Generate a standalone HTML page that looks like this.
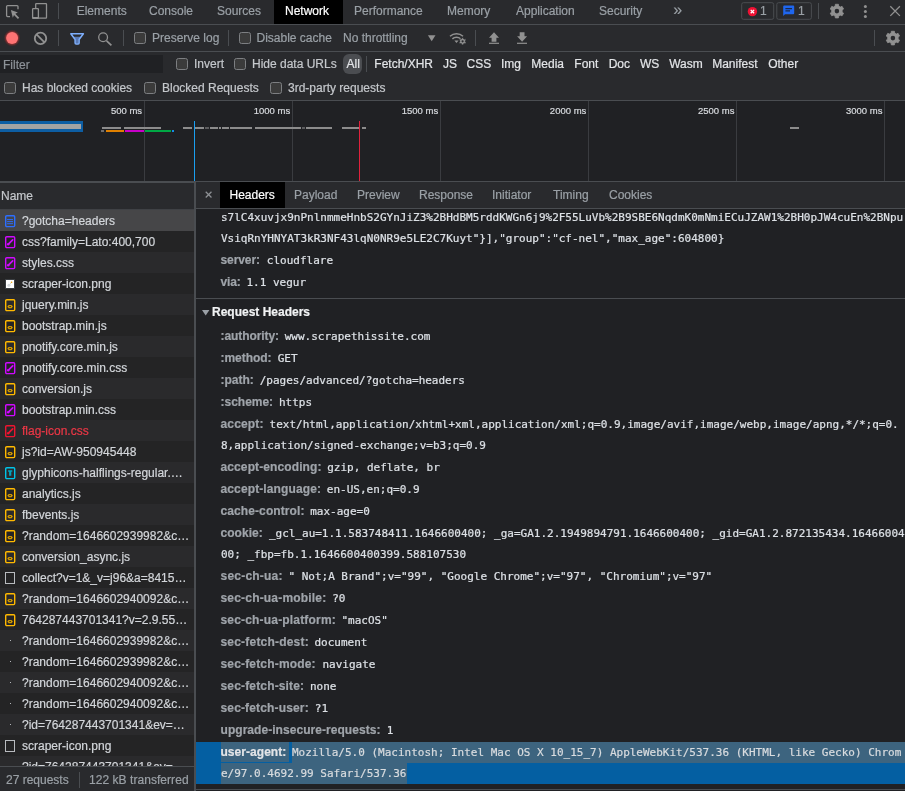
<!DOCTYPE html>
<html><head><meta charset="utf-8"><title>DevTools - Network</title>
<style>
*{box-sizing:border-box;margin:0;padding:0}
html,body{width:905px;height:791px;overflow:hidden;background:#202124}
body{will-change:transform;-webkit-text-stroke:.2px}
body{position:relative;font-family:"Liberation Sans",sans-serif;font-size:12px;color:#e8eaed}
.a,.t,.cb,.sep,.ic{position:absolute}
.t{white-space:pre;line-height:14px;height:14px}
.g{color:#9aa0a6}
.w{color:#e3e5e8}
.bar{position:absolute;left:0;width:905px;background:#292a2d}
.sep{width:1px;background:#4a4d51}
.cb{width:12px;height:12px;border:1px solid #7d7f82;border-radius:2.5px;background:#3b3b3b}
.mono{font-family:"DejaVu Sans Mono","Liberation Mono",monospace;font-size:11px}
.ic{overflow:visible}
.row{position:absolute;left:0;width:194px;height:21px}
.row .n{position:absolute;left:22px;top:4px;line-height:14px;white-space:pre;color:#d3d6da}
.hr{position:absolute;left:196px;width:709px;white-space:pre;line-height:21px}
.hn{position:absolute;left:24.5px;top:0;font-weight:bold;color:#9fa4aa;line-height:21px}
.hv{position:absolute;top:0;color:#dde1e6;line-height:21px}
.sel .hv{color:#d9dcdf}
</style></head><body>

<div class="bar" style="top:0;height:24px"></div>
<div class="a" style="left:0;top:24px;width:905px;height:1px;background:#4a4d51"></div>
<div class="a" style="left:274px;top:0;width:69px;height:24px;background:#000"></div>
<div class="t" style="left:76.7px;top:4px;color:#9aa0a6">Elements</div>
<div class="t" style="left:149px;top:4px;color:#9aa0a6">Console</div>
<div class="t" style="left:217px;top:4px;color:#9aa0a6">Sources</div>
<div class="t" style="left:285px;top:4px;color:#fff">Network</div>
<div class="t" style="left:354px;top:4px;color:#9aa0a6">Performance</div>
<div class="t" style="left:447px;top:4px;color:#9aa0a6">Memory</div>
<div class="t" style="left:516px;top:4px;color:#9aa0a6">Application</div>
<div class="t" style="left:599px;top:4px;color:#9aa0a6">Security</div>
<div class="t g" style="left:673.3px;top:3.4px;font-size:16px">»</div>
<div class="sep" style="left:58px;top:3px;height:16px"></div>
<div class="sep" style="left:818px;top:3px;height:16px"></div>
<div class="bar" style="top:25px;height:26px"></div>
<div class="a" style="left:0;top:51px;width:905px;height:1px;background:#4a4d51"></div>
<div class="sep" style="left:58px;top:30px;height:16px"></div>
<div class="sep" style="left:123px;top:30px;height:16px"></div>
<div class="sep" style="left:228px;top:30px;height:16px"></div>
<div class="sep" style="left:475px;top:30px;height:16px"></div>
<div class="sep" style="left:874px;top:30px;height:16px"></div>
<div class="cb" style="left:134px;top:32px"></div>
<div class="t g" style="left:152px;top:31px">Preserve log</div>
<div class="cb" style="left:239px;top:32px"></div>
<div class="t g" style="left:256.5px;top:31px">Disable cache</div>
<div class="t g" style="left:343px;top:31px">No throttling</div>
<svg class="ic" style="left:0;top:0" width="905" height="52" viewBox="0 0 905 52"><path d="M18 9.3V6.6a1 1 0 0 0-1-1H7.6a1 1 0 0 0-1 1v9a1 1 0 0 0 1 1H10" fill="none" stroke="#919191" stroke-width="1.3"/><path d="M10.9 9.9l7 2.6-2.6 1.3 3.9 3.9-1.3 1.3-3.9-3.9-1.2 2.6z" fill="#919191"/><rect x="35.7" y="3.6" width="10.8" height="14.6" rx=".6" fill="none" stroke="#919191" stroke-width="1.3"/><rect x="32.6" y="8.6" width="5.8" height="9.8" rx=".6" fill="#292a2d" stroke="#919191" stroke-width="1.3"/><rect x="32.6" y="17" width="5.8" height="1.6" fill="#919191"/><circle cx="12.1" cy="38.1" r="8" fill="#8a2a2a" opacity=".35"/><circle cx="12.1" cy="38.1" r="7" fill="#a83838" opacity=".45"/><circle cx="12.1" cy="38.1" r="6" fill="#ff7373"/><circle cx="40.5" cy="38.4" r="5.7" fill="none" stroke="#919191" stroke-width="1.8"/><path d="M36.5 34.4l8 8" stroke="#919191" stroke-width="1.8"/><path d="M73.3 36.8h7.6l-2.2 3v3.6h-3.2v-3.6z" fill="#5878b3"/><path d="M70.8 33.8h12.6l-4.3 5.7v3.5a1 1 0 0 1-1 1h-2a1 1 0 0 1-1-1v-3.5z" fill="none" stroke="#7eaefc" stroke-width="1.5" stroke-linejoin="round"/><circle cx="103.1" cy="37.3" r="4.4" fill="none" stroke="#919191" stroke-width="1.3"/><path d="M106.6 40.8l4.8 4.6" stroke="#919191" stroke-width="1.7"/><path d="M427.9 35.2h7.6l-3.8 6z" fill="#919191"/><path d="M450 36.2a9.6 9.6 0 0 1 13 0" fill="none" stroke="#919191" stroke-width="1.5"/><path d="M452.4 38.9a6 6 0 0 1 8.2 0" fill="none" stroke="#919191" stroke-width="1.5"/><path d="M454.4 40.6h4.2l-2.1 2.4z" fill="#919191"/><path d="M461.65 38.77 L461.86 37.67 L463.34 37.67 L463.55 38.77 L464.31 39.21 L465.37 38.85 L466.11 40.12 L465.26 40.86 L465.26 41.74 L466.11 42.48 L465.37 43.75 L464.31 43.39 L463.55 43.83 L463.34 44.93 L461.86 44.93 L461.65 43.83 L460.89 43.39 L459.83 43.75 L459.09 42.48 L459.94 41.74 L459.94 40.86 L459.09 40.12 L459.83 38.85 L460.89 39.21Z" fill="#919191" stroke="#292a2d" stroke-width=".6"/><circle cx="462.6" cy="41.3" r="1.1" fill="#292a2d"/><path d="M494 32.2l5 5.5h-2.6v4h-4.8v-4H489z" fill="#919191"/><rect x="489" y="42.7" width="10" height="1.2" fill="#919191"/><path d="M519.7 32.2h4.8v4h2.6l-5 5.5-5-5.5h2.6z" fill="#919191"/><rect x="517" y="42.7" width="10" height="1.2" fill="#919191"/><rect x="741.7" y="2.7" width="32" height="16.6" rx="1.8" fill="none" stroke="#4a4d51"/><rect x="776.8" y="2.7" width="34.6" height="16.6" rx="1.8" fill="none" stroke="#4a4d51"/><circle cx="752.4" cy="11.6" r="4.7" fill="#ee1133"/><path d="M750.7 9.9l3.4 3.4M754.1 9.9l-3.4 3.4" stroke="#fff" stroke-width="1.3"/><path d="M784.2 5.6h9a1 1 0 0 1 1 1v6.6a1 1 0 0 1-1 1h-8.2l-1.8 1.8V6.6a1 1 0 0 1 1-1z" fill="#1f66ee"/><path d="M785.4 8.6h6.6M785.4 10.9h4.6" stroke="#1a2a4a" stroke-width="1.1"/><path d="M835.13 6.10 L835.37 4.27 L838.43 4.27 L838.67 6.10 L840.34 7.07 L842.05 6.36 L843.58 9.01 L842.11 10.13 L842.11 12.07 L843.58 13.19 L842.05 15.84 L840.34 15.13 L838.67 16.10 L838.43 17.93 L835.37 17.93 L835.13 16.10 L833.46 15.13 L831.75 15.84 L830.22 13.19 L831.69 12.07 L831.69 10.13 L830.22 9.01 L831.75 6.36 L833.46 7.07Z" fill="#919191" stroke="#919191" stroke-width=".8" stroke-linejoin="round"/><circle cx="836.9" cy="11.1" r="2.3" fill="#292a2d"/><path d="M891.13 33.10 L891.37 31.27 L894.43 31.27 L894.67 33.10 L896.34 34.07 L898.05 33.36 L899.58 36.01 L898.11 37.13 L898.11 39.07 L899.58 40.19 L898.05 42.84 L896.34 42.13 L894.67 43.10 L894.43 44.93 L891.37 44.93 L891.13 43.10 L889.46 42.13 L887.75 42.84 L886.22 40.19 L887.69 39.07 L887.69 37.13 L886.22 36.01 L887.75 33.36 L889.46 34.07Z" fill="#919191" stroke="#919191" stroke-width=".8" stroke-linejoin="round"/><circle cx="892.9" cy="38.1" r="2.3" fill="#292a2d"/><circle cx="865.4" cy="6.4" r="1.5" fill="#919191"/><circle cx="865.4" cy="11.5" r="1.5" fill="#919191"/><circle cx="865.4" cy="16.5" r="1.5" fill="#919191"/><path d="M890.3 6.3l9.6 9.6M899.9 6.3l-9.6 9.6" stroke="#919191" stroke-width="1.3"/></svg>
<div class="t g" style="left:760px;top:4px">1</div>
<div class="t g" style="left:798px;top:4px">1</div>
<div class="bar" style="top:52px;height:48px"></div>
<div class="a" style="left:0;top:100px;width:905px;height:1px;background:#4a4d51"></div>
<div class="a" style="left:0;top:55px;width:163px;height:18px;background:#202124"></div>
<div class="t" style="left:3px;top:57.5px;color:#8d9298">Filter</div>
<div class="cb" style="left:176px;top:58px"></div>
<div class="t" style="left:194px;top:56.5px;color:#c5c8cc">Invert</div>
<div class="cb" style="left:234px;top:58px"></div>
<div class="t" style="left:252px;top:56.5px;color:#c5c8cc">Hide data URLs</div>
<div class="a" style="left:343px;top:54px;width:19px;height:20px;background:#4b4d51;border-radius:6px"></div>
<div class="sep" style="left:366px;top:56px;height:16px"></div>
<div class="t w" style="left:346.5px;top:56.5px">All</div>
<div class="t w" style="left:374.3px;top:56.5px">Fetch/XHR</div>
<div class="t w" style="left:443px;top:56.5px">JS</div>
<div class="t w" style="left:466.5px;top:56.5px">CSS</div>
<div class="t w" style="left:501px;top:56.5px">Img</div>
<div class="t w" style="left:531.3px;top:56.5px">Media</div>
<div class="t w" style="left:574.3px;top:56.5px">Font</div>
<div class="t w" style="left:608.7px;top:56.5px">Doc</div>
<div class="t w" style="left:640px;top:56.5px">WS</div>
<div class="t w" style="left:669.2px;top:56.5px">Wasm</div>
<div class="t w" style="left:712.2px;top:56.5px">Manifest</div>
<div class="t w" style="left:768.2px;top:56.5px">Other</div>
<div class="cb" style="left:4px;top:82px"></div>
<div class="t" style="left:22px;top:81px;color:#c5c8cc">Has blocked cookies</div>
<div class="cb" style="left:144px;top:82px"></div>
<div class="t" style="left:162px;top:81px;color:#c5c8cc">Blocked Requests</div>
<div class="cb" style="left:270px;top:82px"></div>
<div class="t" style="left:288px;top:81px;color:#c5c8cc">3rd-party requests</div>
<div class="a" style="left:0;top:101px;width:905px;height:80px;background:#202124"></div>
<div class="a" style="left:144px;top:101px;width:1px;height:80px;background:#3a3c40"></div>
<div class="t" style="left:82.1px;width:60px;text-align:right;top:105px;font-size:9.5px;line-height:12px;height:12px;color:#d8dbdf">500 ms</div>
<div class="a" style="left:292px;top:101px;width:1px;height:80px;background:#3a3c40"></div>
<div class="t" style="left:230.2px;width:60px;text-align:right;top:105px;font-size:9.5px;line-height:12px;height:12px;color:#d8dbdf">1000 ms</div>
<div class="a" style="left:440px;top:101px;width:1px;height:80px;background:#3a3c40"></div>
<div class="t" style="left:378.2px;width:60px;text-align:right;top:105px;font-size:9.5px;line-height:12px;height:12px;color:#d8dbdf">1500 ms</div>
<div class="a" style="left:588px;top:101px;width:1px;height:80px;background:#3a3c40"></div>
<div class="t" style="left:526.3px;width:60px;text-align:right;top:105px;font-size:9.5px;line-height:12px;height:12px;color:#d8dbdf">2000 ms</div>
<div class="a" style="left:736px;top:101px;width:1px;height:80px;background:#3a3c40"></div>
<div class="t" style="left:674.4px;width:60px;text-align:right;top:105px;font-size:9.5px;line-height:12px;height:12px;color:#d8dbdf">2500 ms</div>
<div class="a" style="left:884px;top:101px;width:1px;height:80px;background:#3a3c40"></div>
<div class="t" style="left:822.4px;width:60px;text-align:right;top:105px;font-size:9.5px;line-height:12px;height:12px;color:#d8dbdf">3000 ms</div>
<div class="a" style="left:0;top:121px;width:83px;height:11px;background:#0d5ea3"></div>
<div class="a" style="left:0;top:123.5px;width:81px;height:5.5px;background:#a3a3a3"></div>
<div class="a" style="left:101.9px;top:126.5px;width:19.3px;height:2.2px;background:#8c8c8c"></div>
<div class="a" style="left:123.6px;top:126.5px;width:37.3px;height:2.2px;background:#8c8c8c"></div>
<div class="a" style="left:183.2px;top:126.5px;width:9.2px;height:2.2px;background:#8c8c8c"></div>
<div class="a" style="left:194.8px;top:126.5px;width:9.2px;height:2.2px;background:#8c8c8c"></div>
<div class="a" style="left:209.7px;top:126.5px;width:8.3px;height:2.2px;background:#8c8c8c"></div>
<div class="a" style="left:219.3px;top:126.5px;width:1.7px;height:2.2px;background:#8c8c8c"></div>
<div class="a" style="left:222.1px;top:126.5px;width:7.1px;height:2.2px;background:#8c8c8c"></div>
<div class="a" style="left:230px;top:126.5px;width:21.9px;height:2.2px;background:#8c8c8c"></div>
<div class="a" style="left:255.2px;top:126.5px;width:45.7px;height:2.2px;background:#8c8c8c"></div>
<div class="a" style="left:306.2px;top:126.5px;width:26.1px;height:2.2px;background:#8c8c8c"></div>
<div class="a" style="left:341.9px;top:126.5px;width:17.1px;height:2.2px;background:#8c8c8c"></div>
<div class="a" style="left:361.8px;top:126.5px;width:4.4px;height:2.2px;background:#8c8c8c"></div>
<div class="a" style="left:790.2px;top:126.5px;width:8.4px;height:2.2px;background:#8c8c8c"></div>
<div class="a" style="left:204.6px;top:126.5px;width:4.4px;height:2.2px;background:#5c5c5e"></div>
<div class="a" style="left:301.8px;top:126.5px;width:3.4px;height:2.2px;background:#5c5c5e"></div>
<div class="a" style="left:101.3px;top:129.5px;width:2.3px;height:2.2px;background:#6e6e70"></div>
<div class="a" style="left:106.2px;top:129.5px;width:17.8px;height:2.4px;background:#e08000"></div>
<div class="a" style="left:124.8px;top:129.5px;width:19.1px;height:2.4px;background:#c800c8"></div>
<div class="a" style="left:144.7px;top:129.5px;width:26.5px;height:2.4px;background:#00a844"></div>
<div class="a" style="left:171.6px;top:129.5px;width:2.4px;height:2.4px;background:#148ce6"></div>
<div class="a" style="left:193.9px;top:121px;width:1.3px;height:60px;background:#1a9ff0"></div>
<div class="a" style="left:359px;top:121px;width:1.2px;height:60px;background:#e0213c"></div>
<div class="a" style="left:0;top:181px;width:195px;height:2px;background:#4a4d51"></div>
<div class="a" style="left:195px;top:181px;width:710px;height:1px;background:#4a4d51"></div>
<div class="a" style="left:0;top:183px;width:194px;height:26px;background:#292a2d"></div>
<div class="a" style="left:0;top:208.6px;width:194px;height:1px;background:#3f4145"></div>
<div class="t" style="left:1px;top:189px;color:#c5c8cc;">Name</div>
<div class="row" style="top:209.6px;background:#464648"><svg class="ic" style="left:4.8px;top:5.2px" width="10.4" height="12.3" viewBox="0 0 10.4 12.3"><rect x=".7" y=".7" width="9" height="10.9" rx="1.1" fill="none" stroke="#2d6eff" stroke-width="1.4"/><path d="M2.1 4.55h5.9M2.1 6.63h5.9M2.1 8.7h5.9" stroke="#2d6eff" stroke-width=".95"/></svg><span class="n" style="">?gotcha=headers</span></div>
<div class="row" style="top:230.6px;background:#242425"><svg class="ic" style="left:4.8px;top:5.2px" width="10.4" height="12.3" viewBox="0 0 10.4 12.3"><rect x=".7" y=".7" width="9" height="10.9" rx="1.1" fill="none" stroke="#cf0aff" stroke-width="1.4"/><path d="M3.4 8.1L7.7 3.8" stroke="#cf0aff" stroke-width="1.7" stroke-linecap="round"/><circle cx="3.2" cy="8.3" r="1.2" fill="#cf0aff"/></svg><span class="n" style="">css?family=Lato:400,700</span></div>
<div class="row" style="top:251.6px;background:#2a2a2c"><svg class="ic" style="left:4.8px;top:5.2px" width="10.4" height="12.3" viewBox="0 0 10.4 12.3"><rect x=".7" y=".7" width="9" height="10.9" rx="1.1" fill="none" stroke="#cf0aff" stroke-width="1.4"/><path d="M3.4 8.1L7.7 3.8" stroke="#cf0aff" stroke-width="1.7" stroke-linecap="round"/><circle cx="3.2" cy="8.3" r="1.2" fill="#cf0aff"/></svg><span class="n" style="">styles.css</span></div>
<div class="row" style="top:272.6px;background:#242425"><svg class="ic" style="left:5px;top:6.4px" width="10" height="10" viewBox="0 0 10 10"><rect x=".5" y=".5" width="9" height="9" fill="#fff" stroke="#3b3e42" stroke-width="1"/><path d="M4 6.2L6.4 3.4" stroke="#d9cfa8" stroke-width=".8"/><circle cx="3.9" cy="6.3" r="1.5" fill="#d3d8dc"/><circle cx="6.6" cy="3.3" r=".8" fill="#f0a000"/></svg><span class="n" style="">scraper-icon.png</span></div>
<div class="row" style="top:293.6px;background:#2a2a2c"><svg class="ic" style="left:4.8px;top:5.2px" width="10.4" height="12.3" viewBox="0 0 10.4 12.3"><rect x=".7" y=".7" width="9" height="10.9" rx="1.1" fill="none" stroke="#ffb900" stroke-width="1.4"/><path d="M2.3 7.5L3.6 5.9h2.9L7.9 7.5 6.5 9.2H3.6z" fill="#d39a00"/><ellipse cx="5.05" cy="7.5" rx="1" ry=".55" fill="#242425"/></svg><span class="n" style="">jquery.min.js</span></div>
<div class="row" style="top:314.6px;background:#242425"><svg class="ic" style="left:4.8px;top:5.2px" width="10.4" height="12.3" viewBox="0 0 10.4 12.3"><rect x=".7" y=".7" width="9" height="10.9" rx="1.1" fill="none" stroke="#ffb900" stroke-width="1.4"/><path d="M2.3 7.5L3.6 5.9h2.9L7.9 7.5 6.5 9.2H3.6z" fill="#d39a00"/><ellipse cx="5.05" cy="7.5" rx="1" ry=".55" fill="#242425"/></svg><span class="n" style="">bootstrap.min.js</span></div>
<div class="row" style="top:335.6px;background:#2a2a2c"><svg class="ic" style="left:4.8px;top:5.2px" width="10.4" height="12.3" viewBox="0 0 10.4 12.3"><rect x=".7" y=".7" width="9" height="10.9" rx="1.1" fill="none" stroke="#ffb900" stroke-width="1.4"/><path d="M2.3 7.5L3.6 5.9h2.9L7.9 7.5 6.5 9.2H3.6z" fill="#d39a00"/><ellipse cx="5.05" cy="7.5" rx="1" ry=".55" fill="#242425"/></svg><span class="n" style="">pnotify.core.min.js</span></div>
<div class="row" style="top:356.6px;background:#242425"><svg class="ic" style="left:4.8px;top:5.2px" width="10.4" height="12.3" viewBox="0 0 10.4 12.3"><rect x=".7" y=".7" width="9" height="10.9" rx="1.1" fill="none" stroke="#cf0aff" stroke-width="1.4"/><path d="M3.4 8.1L7.7 3.8" stroke="#cf0aff" stroke-width="1.7" stroke-linecap="round"/><circle cx="3.2" cy="8.3" r="1.2" fill="#cf0aff"/></svg><span class="n" style="">pnotify.core.min.css</span></div>
<div class="row" style="top:377.6px;background:#2a2a2c"><svg class="ic" style="left:4.8px;top:5.2px" width="10.4" height="12.3" viewBox="0 0 10.4 12.3"><rect x=".7" y=".7" width="9" height="10.9" rx="1.1" fill="none" stroke="#ffb900" stroke-width="1.4"/><path d="M2.3 7.5L3.6 5.9h2.9L7.9 7.5 6.5 9.2H3.6z" fill="#d39a00"/><ellipse cx="5.05" cy="7.5" rx="1" ry=".55" fill="#242425"/></svg><span class="n" style="">conversion.js</span></div>
<div class="row" style="top:398.6px;background:#242425"><svg class="ic" style="left:4.8px;top:5.2px" width="10.4" height="12.3" viewBox="0 0 10.4 12.3"><rect x=".7" y=".7" width="9" height="10.9" rx="1.1" fill="none" stroke="#cf0aff" stroke-width="1.4"/><path d="M3.4 8.1L7.7 3.8" stroke="#cf0aff" stroke-width="1.7" stroke-linecap="round"/><circle cx="3.2" cy="8.3" r="1.2" fill="#cf0aff"/></svg><span class="n" style="">bootstrap.min.css</span></div>
<div class="row" style="top:419.6px;background:#2a2a2c"><svg class="ic" style="left:4.8px;top:5.2px" width="10.4" height="12.3" viewBox="0 0 10.4 12.3"><rect x=".7" y=".7" width="9" height="10.9" rx="1.1" fill="none" stroke="#ee1530" stroke-width="1.4"/><path d="M3.4 8.1L7.7 3.8" stroke="#ee1530" stroke-width="1.7" stroke-linecap="round"/><circle cx="3.2" cy="8.3" r="1.2" fill="#ee1530"/></svg><span class="n" style=";color:#ec3746">flag-icon.css</span></div>
<div class="row" style="top:440.6px;background:#242425"><svg class="ic" style="left:4.8px;top:5.2px" width="10.4" height="12.3" viewBox="0 0 10.4 12.3"><rect x=".7" y=".7" width="9" height="10.9" rx="1.1" fill="none" stroke="#ffb900" stroke-width="1.4"/><path d="M2.3 7.5L3.6 5.9h2.9L7.9 7.5 6.5 9.2H3.6z" fill="#d39a00"/><ellipse cx="5.05" cy="7.5" rx="1" ry=".55" fill="#242425"/></svg><span class="n" style="">js?id=AW-950945448</span></div>
<div class="row" style="top:461.6px;background:#2a2a2c"><svg class="ic" style="left:4.8px;top:5.2px" width="10.4" height="12.3" viewBox="0 0 10.4 12.3"><rect x=".7" y=".7" width="9" height="10.9" rx="1.1" fill="none" stroke="#00c4e8" stroke-width="1.4"/><path d="M3.1 3.3h4.2v1.5H3.1zM4.1 4.8h2.2v4H4.1z" fill="#00a3bf"/></svg><span class="n" style="">glyphicons-halflings-regular.…</span></div>
<div class="row" style="top:482.6px;background:#242425"><svg class="ic" style="left:4.8px;top:5.2px" width="10.4" height="12.3" viewBox="0 0 10.4 12.3"><rect x=".7" y=".7" width="9" height="10.9" rx="1.1" fill="none" stroke="#ffb900" stroke-width="1.4"/><path d="M2.3 7.5L3.6 5.9h2.9L7.9 7.5 6.5 9.2H3.6z" fill="#d39a00"/><ellipse cx="5.05" cy="7.5" rx="1" ry=".55" fill="#242425"/></svg><span class="n" style="">analytics.js</span></div>
<div class="row" style="top:503.6px;background:#2a2a2c"><svg class="ic" style="left:4.8px;top:5.2px" width="10.4" height="12.3" viewBox="0 0 10.4 12.3"><rect x=".7" y=".7" width="9" height="10.9" rx="1.1" fill="none" stroke="#ffb900" stroke-width="1.4"/><path d="M2.3 7.5L3.6 5.9h2.9L7.9 7.5 6.5 9.2H3.6z" fill="#d39a00"/><ellipse cx="5.05" cy="7.5" rx="1" ry=".55" fill="#242425"/></svg><span class="n" style="">fbevents.js</span></div>
<div class="row" style="top:524.6px;background:#242425"><svg class="ic" style="left:4.8px;top:5.2px" width="10.4" height="12.3" viewBox="0 0 10.4 12.3"><rect x=".7" y=".7" width="9" height="10.9" rx="1.1" fill="none" stroke="#ffb900" stroke-width="1.4"/><path d="M2.3 7.5L3.6 5.9h2.9L7.9 7.5 6.5 9.2H3.6z" fill="#d39a00"/><ellipse cx="5.05" cy="7.5" rx="1" ry=".55" fill="#242425"/></svg><span class="n" style="">?random=1646602939982&amp;c…</span></div>
<div class="row" style="top:545.6px;background:#2a2a2c"><svg class="ic" style="left:4.8px;top:5.2px" width="10.4" height="12.3" viewBox="0 0 10.4 12.3"><rect x=".7" y=".7" width="9" height="10.9" rx="1.1" fill="none" stroke="#ffb900" stroke-width="1.4"/><path d="M2.3 7.5L3.6 5.9h2.9L7.9 7.5 6.5 9.2H3.6z" fill="#d39a00"/><ellipse cx="5.05" cy="7.5" rx="1" ry=".55" fill="#242425"/></svg><span class="n" style="">conversion_async.js</span></div>
<div class="row" style="top:566.6px;background:#242425"><svg class="ic" style="left:5px;top:5.3px" width="10" height="12" viewBox="0 0 10 12"><rect x=".5" y=".5" width="9" height="11" fill="none" stroke="#b8bbbf" stroke-width="1"/></svg><span class="n" style="">collect?v=1&amp;_v=j96&amp;a=8415…</span></div>
<div class="row" style="top:587.6px;background:#2a2a2c"><svg class="ic" style="left:4.8px;top:5.2px" width="10.4" height="12.3" viewBox="0 0 10.4 12.3"><rect x=".7" y=".7" width="9" height="10.9" rx="1.1" fill="none" stroke="#ffb900" stroke-width="1.4"/><path d="M2.3 7.5L3.6 5.9h2.9L7.9 7.5 6.5 9.2H3.6z" fill="#d39a00"/><ellipse cx="5.05" cy="7.5" rx="1" ry=".55" fill="#242425"/></svg><span class="n" style="">?random=1646602940092&amp;c…</span></div>
<div class="row" style="top:608.6px;background:#242425"><svg class="ic" style="left:4.8px;top:5.2px" width="10.4" height="12.3" viewBox="0 0 10.4 12.3"><rect x=".7" y=".7" width="9" height="10.9" rx="1.1" fill="none" stroke="#ffb900" stroke-width="1.4"/><path d="M2.3 7.5L3.6 5.9h2.9L7.9 7.5 6.5 9.2H3.6z" fill="#d39a00"/><ellipse cx="5.05" cy="7.5" rx="1" ry=".55" fill="#242425"/></svg><span class="n" style="">764287443701341?v=2.9.55…</span></div>
<div class="row" style="top:629.6px;background:#2a2a2c"><div class="a" style="left:9.5px;top:10.1px;width:1.8px;height:1.8px;background:#b4b7bb"></div><span class="n" style="">?random=1646602939982&amp;c…</span></div>
<div class="row" style="top:650.6px;background:#242425"><div class="a" style="left:9.5px;top:10.1px;width:1.8px;height:1.8px;background:#b4b7bb"></div><span class="n" style="">?random=1646602939982&amp;c…</span></div>
<div class="row" style="top:671.6px;background:#2a2a2c"><div class="a" style="left:9.5px;top:10.1px;width:1.8px;height:1.8px;background:#b4b7bb"></div><span class="n" style="">?random=1646602940092&amp;c…</span></div>
<div class="row" style="top:692.6px;background:#242425"><div class="a" style="left:9.5px;top:10.1px;width:1.8px;height:1.8px;background:#b4b7bb"></div><span class="n" style="">?random=1646602940092&amp;c…</span></div>
<div class="row" style="top:713.6px;background:#2a2a2c"><div class="a" style="left:9.5px;top:10.1px;width:1.8px;height:1.8px;background:#b4b7bb"></div><span class="n" style="">?id=764287443701341&amp;ev=…</span></div>
<div class="row" style="top:734.6px;background:#242425"><svg class="ic" style="left:5px;top:5.3px" width="10" height="12" viewBox="0 0 10 12"><rect x=".5" y=".5" width="9" height="11" fill="none" stroke="#b8bbbf" stroke-width="1"/></svg><span class="n" style="">scraper-icon.png</span></div>
<div class="row" style="top:755.6px;background:#2a2a2c"><div class="a" style="left:9.5px;top:10.1px;width:1.8px;height:1.8px;background:#b4b7bb"></div><span class="n" style="">?id=764287443701341&amp;ev=…</span></div>
<div class="a" style="left:0;top:766px;width:194px;height:25px;background:#292a2d;border-top:1px solid #4a4d51"></div>
<div class="t g" style="left:6px;top:773px">27 requests</div>
<div class="sep" style="left:79px;top:772px;height:16px"></div>
<div class="t g" style="left:89px;top:773px;letter-spacing:.05px">122 kB transferred</div>
<div class="a" style="left:194px;top:182px;width:2px;height:609px;background:#4a4d51"></div>
<div class="a" style="left:196px;top:182px;width:709px;height:26px;background:#292a2d"></div>
<div class="a" style="left:196px;top:208px;width:709px;height:1px;background:#4a4d51"></div>
<div class="a" style="left:220px;top:182px;width:65px;height:26px;background:#000"></div>
<svg class="ic" style="left:205.4px;top:190.9px" width="7.2" height="7.2" viewBox="0 0 8 8"><path d="M.8.8l6.4 6.4M7.2.8L.8 7.2" stroke="#8e9195" stroke-width="1.4"/></svg>
<div class="t" style="left:229.5px;top:188px;color:#fff">Headers</div>
<div class="t" style="left:294px;top:188px;color:#9aa0a6">Payload</div>
<div class="t" style="left:357px;top:188px;color:#9aa0a6">Preview</div>
<div class="t" style="left:419px;top:188px;color:#9aa0a6">Response</div>
<div class="t" style="left:492px;top:188px;color:#9aa0a6">Initiator</div>
<div class="t" style="left:553px;top:188px;color:#9aa0a6">Timing</div>
<div class="t" style="left:609px;top:188px;color:#9aa0a6">Cookies</div>
<div class="a" style="left:196px;top:742px;width:709px;height:42px;background:#045fa2"></div>
<div class="a" style="left:221px;top:742px;width:68px;height:19.5px;background:#3d647f"></div>
<div class="a" style="left:292px;top:742px;width:613px;height:21px;background:#3d647f"></div>
<div class="a" style="left:221px;top:763px;width:185.5px;height:21px;background:#3d647f"></div>
<div class="hr" style="top:207px;height:42px"><span class="hv mono" style="left:25px;top:0px">s7lC4xuvjx9nPnlnmmeHnbS2GYnJiZ3%2BHdBM5rddKWGn6j9%2F55LuVb%2B9SBE6NqdmK0mNmiECuJZAW1%2BH0pJW4cuEn%2BNpu</span><span class="hv mono" style="left:25px;top:21px">VsiqRnYHNYAT3kR3NF43lqN0NR9e5LE2C7Kuyt&quot;}],&quot;group&quot;:&quot;cf-nel&quot;,&quot;max_age&quot;:604800}</span></div>
<div class="hr" style="top:250px;height:21px"><span class="hn" style="letter-spacing:-0.08px">server:</span><span class="hv mono" style="left:70.8px;top:0px">cloudflare</span></div>
<div class="hr" style="top:272px;height:21px"><span class="hn" style="letter-spacing:-0.12px">via:</span><span class="hv mono" style="left:50.5px;top:0px">1.1 vegur</span></div>
<div class="a" style="left:196px;top:298px;width:709px;height:1px;background:#4a4d51"></div>
<svg class="ic" style="left:202px;top:309.5px" width="8" height="6" viewBox="0 0 8 6"><path d="M0 0h7.4L3.7 5.6z" fill="#9aa0a6"/></svg>
<div class="t" style="left:212px;top:304.5px;font-weight:bold;color:#f1f3f4">Request Headers</div>
<div class="hr" style="top:326px;height:21px"><span class="hn" style="letter-spacing:-0.08px">:authority:</span><span class="hv mono" style="left:88.7px;top:0px">www.scrapethissite.com</span></div>
<div class="hr" style="top:348px;height:21px"><span class="hn" style="letter-spacing:-0.03px">:method:</span><span class="hv mono" style="left:81.7px;top:0px">GET</span></div>
<div class="hr" style="top:370px;height:21px"><span class="hn" style="letter-spacing:-0.02px">:path:</span><span class="hv mono" style="left:63.7px;top:0px">/pages/advanced/?gotcha=headers</span></div>
<div class="hr" style="top:392px;height:21px"><span class="hn" style="letter-spacing:-0.01px">:scheme:</span><span class="hv mono" style="left:83px;top:0px">https</span></div>
<div class="hr" style="top:414px;height:42px"><span class="hn" style="letter-spacing:0.15px">accept:</span><span class="hv mono" style="left:73.6px;top:0px">text/html,application/xhtml+xml,application/xml;q=0.9,image/avif,image/webp,image/apng,*/*;q=0.</span><span class="hv mono" style="left:25px;top:21px">8,application/signed-exchange;v=b3;q=0.9</span></div>
<div class="hr" style="top:457px;height:21px"><span class="hn" style="letter-spacing:0.11px">accept-encoding:</span><span class="hv mono" style="left:131.2px;top:0px">gzip, deflate, br</span></div>
<div class="hr" style="top:479px;height:21px"><span class="hn" style="letter-spacing:0.12px">accept-language:</span><span class="hv mono" style="left:130.8px;top:0px">en-US,en;q=0.9</span></div>
<div class="hr" style="top:501px;height:21px"><span class="hn" style="letter-spacing:0.1px">cache-control:</span><span class="hv mono" style="left:114.2px;top:0px">max-age=0</span></div>
<div class="hr" style="top:523px;height:42px"><span class="hn" style="letter-spacing:0.04px">cookie:</span><span class="hv mono" style="left:72.9px;top:0px">_gcl_au=1.1.583748411.1646600400; _ga=GA1.2.1949894791.1646600400; _gid=GA1.2.872135434.16466004</span><span class="hv mono" style="left:25px;top:21px">00; _fbp=fb.1.1646600400399.588107530</span></div>
<div class="hr" style="top:566px;height:21px"><span class="hn" style="letter-spacing:0.22px">sec-ch-ua:</span><span class="hv mono" style="left:92.4px;top:0px">&quot; Not;A Brand&quot;;v=&quot;99&quot;, &quot;Google Chrome&quot;;v=&quot;97&quot;, &quot;Chromium&quot;;v=&quot;97&quot;</span></div>
<div class="hr" style="top:588px;height:21px"><span class="hn" style="letter-spacing:0.19px">sec-ch-ua-mobile:</span><span class="hv mono" style="left:136.2px;top:0px">?0</span></div>
<div class="hr" style="top:610px;height:21px"><span class="hn" style="letter-spacing:0.18px">sec-ch-ua-platform:</span><span class="hv mono" style="left:145.5px;top:0px">&quot;macOS&quot;</span></div>
<div class="hr" style="top:632px;height:21px"><span class="hn" style="letter-spacing:0.2px">sec-fetch-dest:</span><span class="hv mono" style="left:118.4px;top:0px">document</span></div>
<div class="hr" style="top:654px;height:21px"><span class="hn" style="letter-spacing:0.17px">sec-fetch-mode:</span><span class="hv mono" style="left:126.4px;top:0px">navigate</span></div>
<div class="hr" style="top:676px;height:21px"><span class="hn" style="letter-spacing:0.16px">sec-fetch-site:</span><span class="hv mono" style="left:113.9px;top:0px">none</span></div>
<div class="hr" style="top:698px;height:21px"><span class="hn" style="letter-spacing:0.15px">sec-fetch-user:</span><span class="hv mono" style="left:118.8px;top:0px">?1</span></div>
<div class="hr" style="top:720px;height:21px"><span class="hn" style="letter-spacing:0.05px">upgrade-insecure-requests:</span><span class="hv mono" style="left:190.7px;top:0px">1</span></div>
<div class="hr sel" style="top:742px;height:42px"><span class="hn" style="letter-spacing:0.04px;color:#e3e5e8">user-agent:</span><span class="hv mono" style="left:96px;top:0px">Mozilla/5.0 (Macintosh; Intel Mac OS X 10_15_7) AppleWebKit/537.36 (KHTML, like Gecko) Chrom</span><span class="hv mono" style="left:25px;top:21px">e/97.0.4692.99 Safari/537.36</span></div>
<div class="a" style="left:196px;top:789px;width:709px;height:1px;background:#4a4d51"></div>
</body></html>
